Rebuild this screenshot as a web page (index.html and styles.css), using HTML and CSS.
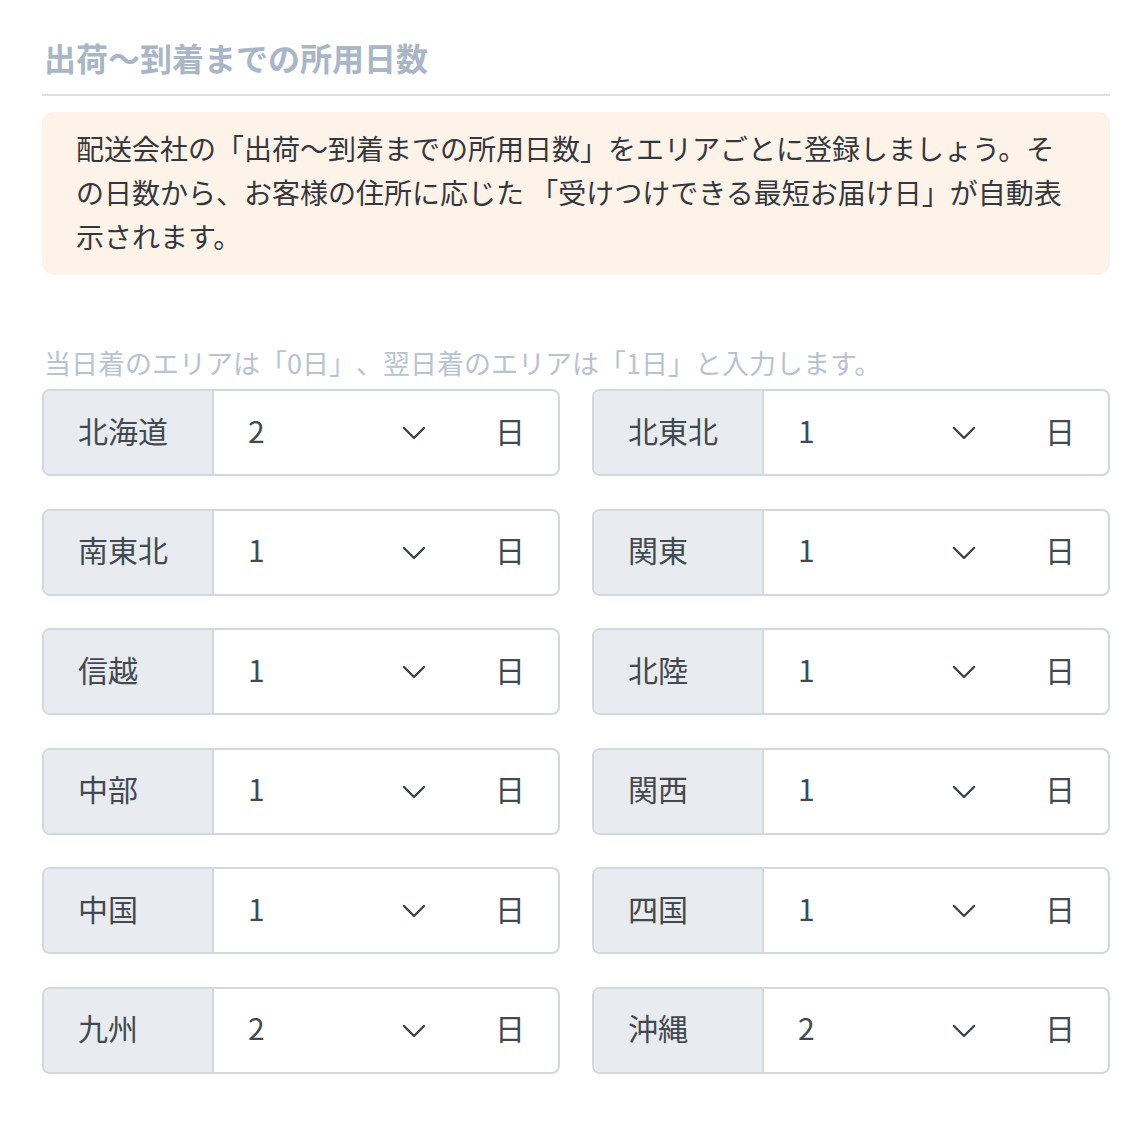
FILE: index.html
```html
<!DOCTYPE html>
<html lang="ja">
  <head>
    <meta charset="UTF-8" />
    <meta name="viewport" content="width=device-width, initial-scale=1.0" />
    <title>出荷〜到着までの所用日数</title>
    <link rel="stylesheet" href="styles.css">
  </head>
  <body>
    <div class="container">
      <h2 class="title">出荷〜到着までの所用日数</h2>

      <div class="notice">
        配送会社の「出荷〜到着までの所用日数」をエリアごとに登録しましょう。その日数から、お客様の住所に応じた 「受けつけできる最短お届け日」が自動表示されます。
      </div>

      <p class="hint">当日着のエリアは「0日」、翌日着のエリアは「1日」と入力します。</p>

      <div class="areas">
        <div class="group">
          <span class="label">北海道</span>
          <div class="select-wrap">
            <select><option>0</option><option>1</option><option selected>2</option><option>3</option></select>
            <svg class="chev" width="24" height="14" viewBox="0 0 24 14"><path d="M2 2l10 10L22 2" fill="none" stroke="#3d4248" stroke-width="2.4" stroke-linecap="round" stroke-linejoin="round"/></svg>
          </div>
          <span class="unit">日</span>
        </div>
        <div class="group">
          <span class="label">北東北</span>
          <div class="select-wrap">
            <select><option>0</option><option selected>1</option><option>2</option><option>3</option></select>
            <svg class="chev" width="24" height="14" viewBox="0 0 24 14"><path d="M2 2l10 10L22 2" fill="none" stroke="#3d4248" stroke-width="2.4" stroke-linecap="round" stroke-linejoin="round"/></svg>
          </div>
          <span class="unit">日</span>
        </div>
        <div class="group">
          <span class="label">南東北</span>
          <div class="select-wrap">
            <select><option>0</option><option selected>1</option><option>2</option><option>3</option></select>
            <svg class="chev" width="24" height="14" viewBox="0 0 24 14"><path d="M2 2l10 10L22 2" fill="none" stroke="#3d4248" stroke-width="2.4" stroke-linecap="round" stroke-linejoin="round"/></svg>
          </div>
          <span class="unit">日</span>
        </div>
        <div class="group">
          <span class="label">関東</span>
          <div class="select-wrap">
            <select><option>0</option><option selected>1</option><option>2</option><option>3</option></select>
            <svg class="chev" width="24" height="14" viewBox="0 0 24 14"><path d="M2 2l10 10L22 2" fill="none" stroke="#3d4248" stroke-width="2.4" stroke-linecap="round" stroke-linejoin="round"/></svg>
          </div>
          <span class="unit">日</span>
        </div>
        <div class="group">
          <span class="label">信越</span>
          <div class="select-wrap">
            <select><option>0</option><option selected>1</option><option>2</option><option>3</option></select>
            <svg class="chev" width="24" height="14" viewBox="0 0 24 14"><path d="M2 2l10 10L22 2" fill="none" stroke="#3d4248" stroke-width="2.4" stroke-linecap="round" stroke-linejoin="round"/></svg>
          </div>
          <span class="unit">日</span>
        </div>
        <div class="group">
          <span class="label">北陸</span>
          <div class="select-wrap">
            <select><option>0</option><option selected>1</option><option>2</option><option>3</option></select>
            <svg class="chev" width="24" height="14" viewBox="0 0 24 14"><path d="M2 2l10 10L22 2" fill="none" stroke="#3d4248" stroke-width="2.4" stroke-linecap="round" stroke-linejoin="round"/></svg>
          </div>
          <span class="unit">日</span>
        </div>
        <div class="group">
          <span class="label">中部</span>
          <div class="select-wrap">
            <select><option>0</option><option selected>1</option><option>2</option><option>3</option></select>
            <svg class="chev" width="24" height="14" viewBox="0 0 24 14"><path d="M2 2l10 10L22 2" fill="none" stroke="#3d4248" stroke-width="2.4" stroke-linecap="round" stroke-linejoin="round"/></svg>
          </div>
          <span class="unit">日</span>
        </div>
        <div class="group">
          <span class="label">関西</span>
          <div class="select-wrap">
            <select><option>0</option><option selected>1</option><option>2</option><option>3</option></select>
            <svg class="chev" width="24" height="14" viewBox="0 0 24 14"><path d="M2 2l10 10L22 2" fill="none" stroke="#3d4248" stroke-width="2.4" stroke-linecap="round" stroke-linejoin="round"/></svg>
          </div>
          <span class="unit">日</span>
        </div>
        <div class="group">
          <span class="label">中国</span>
          <div class="select-wrap">
            <select><option>0</option><option selected>1</option><option>2</option><option>3</option></select>
            <svg class="chev" width="24" height="14" viewBox="0 0 24 14"><path d="M2 2l10 10L22 2" fill="none" stroke="#3d4248" stroke-width="2.4" stroke-linecap="round" stroke-linejoin="round"/></svg>
          </div>
          <span class="unit">日</span>
        </div>
        <div class="group">
          <span class="label">四国</span>
          <div class="select-wrap">
            <select><option>0</option><option selected>1</option><option>2</option><option>3</option></select>
            <svg class="chev" width="24" height="14" viewBox="0 0 24 14"><path d="M2 2l10 10L22 2" fill="none" stroke="#3d4248" stroke-width="2.4" stroke-linecap="round" stroke-linejoin="round"/></svg>
          </div>
          <span class="unit">日</span>
        </div>
        <div class="group">
          <span class="label">九州</span>
          <div class="select-wrap">
            <select><option>0</option><option>1</option><option selected>2</option><option>3</option></select>
            <svg class="chev" width="24" height="14" viewBox="0 0 24 14"><path d="M2 2l10 10L22 2" fill="none" stroke="#3d4248" stroke-width="2.4" stroke-linecap="round" stroke-linejoin="round"/></svg>
          </div>
          <span class="unit">日</span>
        </div>
        <div class="group">
          <span class="label">沖縄</span>
          <div class="select-wrap">
            <select><option>0</option><option>1</option><option selected>2</option><option>3</option></select>
            <svg class="chev" width="24" height="14" viewBox="0 0 24 14"><path d="M2 2l10 10L22 2" fill="none" stroke="#3d4248" stroke-width="2.4" stroke-linecap="round" stroke-linejoin="round"/></svg>
          </div>
          <span class="unit">日</span>
        </div>
      </div>
    </div>
  </body>
</html>
```

FILE: styles.css
```css
* {
  margin: 0;
  padding: 0;
  box-sizing: border-box;
}

body {
  font-family: "Noto Sans CJK JP", "Noto Sans", sans-serif;
  color: #3f444a;
  background: #fff;
  text-spacing-trim: space-all;
}

.container {
  width: 1068px;
  margin-left: 42px;
}

.title {
  font-size: 32px;
  font-weight: bold;
  line-height: 48px;
  color: #a9b6c8;
  padding: 33px 0 13px 2px;
  border-bottom: 2px solid #dfe0e2;
}

.notice {
  margin-top: 16px;
  background: #fef3e8;
  border-radius: 12px;
  padding: 14px 34px 17px;
  font-size: 28px;
  line-height: 44px;
  color: #33383e;
}

.hint {
  margin-top: 68px;
  font-size: 27px;
  line-height: 40px;
  color: #b8c3d2;
  padding-left: 2px;
}

.areas {
  margin-top: 6px;
  display: grid;
  grid-template-columns: 1fr 1fr;
  column-gap: 32px;
  row-gap: 32.6px;
}

.group {
  display: flex;
  align-items: stretch;
  height: 87px;
  border: 2px solid #d3d8de;
  border-radius: 8px;
  overflow: hidden;
  font-size: 30px;
}

.label {
  width: 170px;
  background: #e8ebef;
  border-right: 2px solid #d3d8de;
  padding: 0 0 6px 34px;
  display: flex;
  align-items: center;
  color: #44494f;
}

.select-wrap {
  flex: 1;
  display: flex;
  align-items: center;
  padding-left: 34px;
}

.select-wrap select {
  flex: 1;
  appearance: none;
  -webkit-appearance: none;
  border: none;
  background: none;
  font-family: inherit;
  font-size: 30px;
  color: #44494f;
  outline: none;
  margin-bottom: 6px;
}

.chev {
  margin-left: 8px;
  margin-top: 1px;
}

.unit {
  display: flex;
  align-items: center;
  padding: 0 33px 6px 69px;
  color: #44494f;
}
```
